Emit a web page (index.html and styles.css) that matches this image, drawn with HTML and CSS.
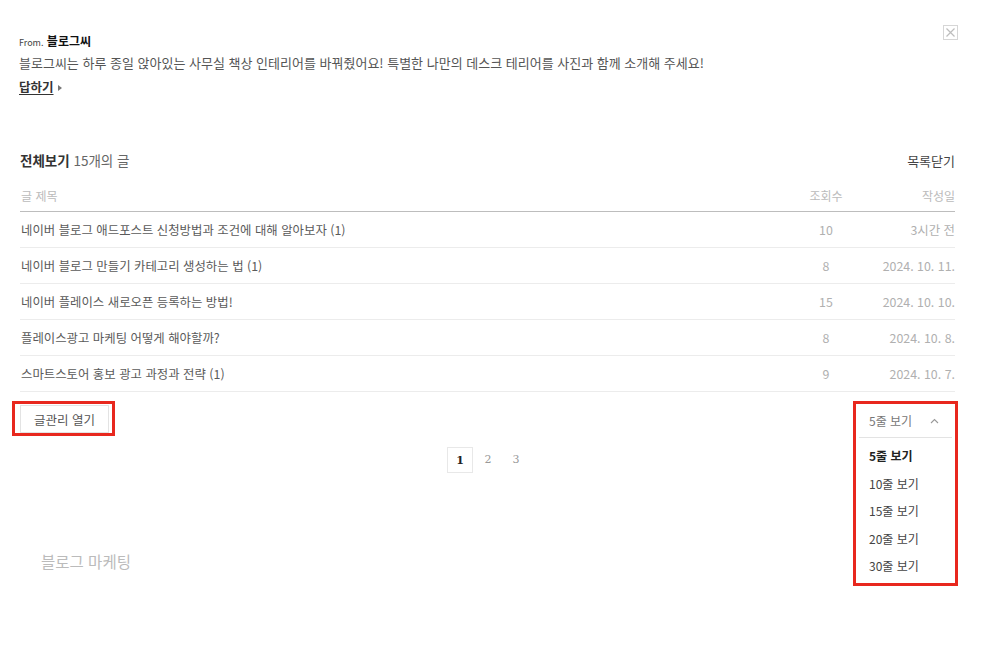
FILE: index.html
```html
<!DOCTYPE html>
<html lang="ko">
<head>
<meta charset="utf-8">
<link rel="stylesheet" href="styles.css">
</head>
<body>
<div class="page">
  <section class="prompt">
    <div class="from"><span class="from-label">From.</span> <strong>블로그씨</strong></div>
    <p class="question">블로그씨는 하루 종일 앉아있는 사무실 책상 인테리어를 바꿔줬어요! 특별한 나만의 데스크 테리어를 사진과 함께 소개해 주세요!</p>
    <a class="reply">답하기</a><span class="reply-arrow"></span>
    <button class="close" aria-label="닫기">
      <svg width="15" height="15" viewBox="0 0 15 15"><rect x="0.5" y="0.5" width="14" height="14" fill="none" stroke="#d6d6d6"/><path d="M3.5 3.5 L11.5 11.5 M11.5 3.5 L3.5 11.5" stroke="#bdbdbd" stroke-width="1.2"/></svg>
    </button>
  </section>

  <section class="list">
    <div class="list-head">
      <div class="list-title"><strong>전체보기</strong> 15개의 글</div>
      <a class="list-close">목록닫기</a>
    </div>
    <div class="table">
      <div class="row head">
        <span class="c-title">글 제목</span>
        <span class="c-views">조회수</span>
        <span class="c-date">작성일</span>
      </div>
      <div class="row">
        <span class="c-title">네이버 블로그 애드포스트 신청방법과 조건에 대해 알아보자 (1)</span>
        <span class="c-views">10</span>
        <span class="c-date">3시간 전</span>
      </div>
      <div class="row">
        <span class="c-title">네이버 블로그 만들기 카테고리 생성하는 법 (1)</span>
        <span class="c-views">8</span>
        <span class="c-date">2024. 10. 11.</span>
      </div>
      <div class="row">
        <span class="c-title">네이버 플레이스 새로오픈 등록하는 방법!</span>
        <span class="c-views">15</span>
        <span class="c-date">2024. 10. 10.</span>
      </div>
      <div class="row">
        <span class="c-title">플레이스광고 마케팅 어떻게 해야할까?</span>
        <span class="c-views">8</span>
        <span class="c-date">2024. 10. 8.</span>
      </div>
      <div class="row">
        <span class="c-title">스마트스토어 홍보 광고 과정과 전략 (1)</span>
        <span class="c-views">9</span>
        <span class="c-date">2024. 10. 7.</span>
      </div>
    </div>

    <div class="list-foot">
      <div class="mark mark-btn"><button class="manage">글관리 열기</button></div>
      <div class="mark mark-select">
        <div class="select">
          <span>5줄 보기</span>
          <svg class="caret" width="9" height="6" viewBox="0 0 9 6"><path d="M1 5 L4.5 1.5 L8 5" fill="none" stroke="#999" stroke-width="1.1"/></svg>
        </div>
        <ul class="options">
          <li class="on">5줄 보기</li>
          <li>10줄 보기</li>
          <li>15줄 보기</li>
          <li>20줄 보기</li>
          <li>30줄 보기</li>
        </ul>
      </div>
    </div>

    <nav class="pager">
      <span class="page-num current">1</span>
      <span class="page-num">2</span>
      <span class="page-num">3</span>
    </nav>
  </section>

  <section class="category">블로그 마케팅</section>
</div>
</body>
</html>
```

FILE: styles.css
```css
* { box-sizing: border-box; }
html, body { margin: 0; padding: 0; background: #fff; }
body {
  font-family: "Noto Sans CJK KR", "Noto Sans", sans-serif;
  color: #555;
  width: 999px;
  height: 645px;
  overflow: hidden;
}
.page { padding: 0 44px 0 20px; }

.prompt { position: relative; padding-top: 32px; height: 147px; }
.from { font-size: 12px; line-height: 18px; color: #222; margin-left: -1px; }
.from-label { font-size: 9px; color: #444; }
.from strong { font-weight: 700; color: #111; }
.question { margin: 2px 0 0 -1px; font-size: 13px; line-height: 18px; color: #555; }
.reply { display: inline-block; margin-top: 6px; font-size: 12.5px; line-height: 18px; font-weight: 700; color: #333; text-decoration: underline; text-underline-offset: 2px; margin-left: -1px; }
.reply-arrow { display: inline-block; width: 0; height: 0; border-left: 4px solid #777; border-top: 3px solid transparent; border-bottom: 3px solid transparent; margin-left: 4px; vertical-align: 1px; }
.close { position: absolute; top: 25px; right: -3px; width: 15px; height: 15px; padding: 0; border: 0; background: none; }
.close svg { display: block; }

.list-head { display: flex; justify-content: space-between; align-items: center; height: 26px; }
.list-title { font-size: 13.5px; color: #666; }
.list-title strong { color: #333; font-weight: 700; }
.list-close { font-size: 13px; color: #444; }

.table { margin-top: 13px; }
.row { display: flex; align-items: center; height: 36px; border-bottom: 1px solid #ececec; font-size: 12.4px; }
.row.head { height: 26px; border-bottom: 1px solid #bdbdbd; align-items: flex-start; padding-top: 1px; font-size: 12px; }
.c-title { flex: 1; padding-left: 1px; color: #5a5a5a; }
.row.head .c-title, .row.head .c-views, .row.head .c-date { color: #bbb; }
.c-views { width: 60px; text-align: center; color: #b0b0b0; margin-right: 9px; }
.c-date { width: 90px; text-align: right; color: #b0b0b0; }

.list-foot { display: flex; justify-content: space-between; align-items: flex-start; margin-top: 9px; margin-left: -8px; margin-right: -3px; }
.mark { border: 3px solid #e8281e; }
.mark-btn { padding: 1px 3px 0 5px; }
.manage { height: 28px; padding: 0 13px; border: 1px solid #e3e3e3; background: #fff; font-family: inherit; font-size: 12.5px; color: #555; display: block; }
.mark-select { width: 105px; height: 185px; position: relative; padding: 0 3px; }
.select { display: flex; align-items: center; justify-content: space-between; height: 34px; border-bottom: 1px solid #e3e3e3; padding: 0 13px 0 10px; font-size: 12px; color: #777; }
.options { list-style: none; margin: 0; padding: 4px 0 0 10px; font-size: 12px; color: #444; }
.options li { height: 27.5px; line-height: 27.5px; }
.options li.on { font-weight: 700; color: #222; }

.pager { display: flex; justify-content: center; align-items: center; gap: 2px; margin-top: -139px; padding-left: 1px; }
.page-num { width: 26px; height: 26px; line-height: 25px; text-align: center; font-family: "DejaVu Serif", serif; font-size: 11px; color: #999; }
.page-num.current { border: 1px solid #e8e8e8; color: #222; font-weight: 700; }

.category { margin-top: 77px; padding-left: 21px; font-size: 15.5px; color: #bbb; }
```
